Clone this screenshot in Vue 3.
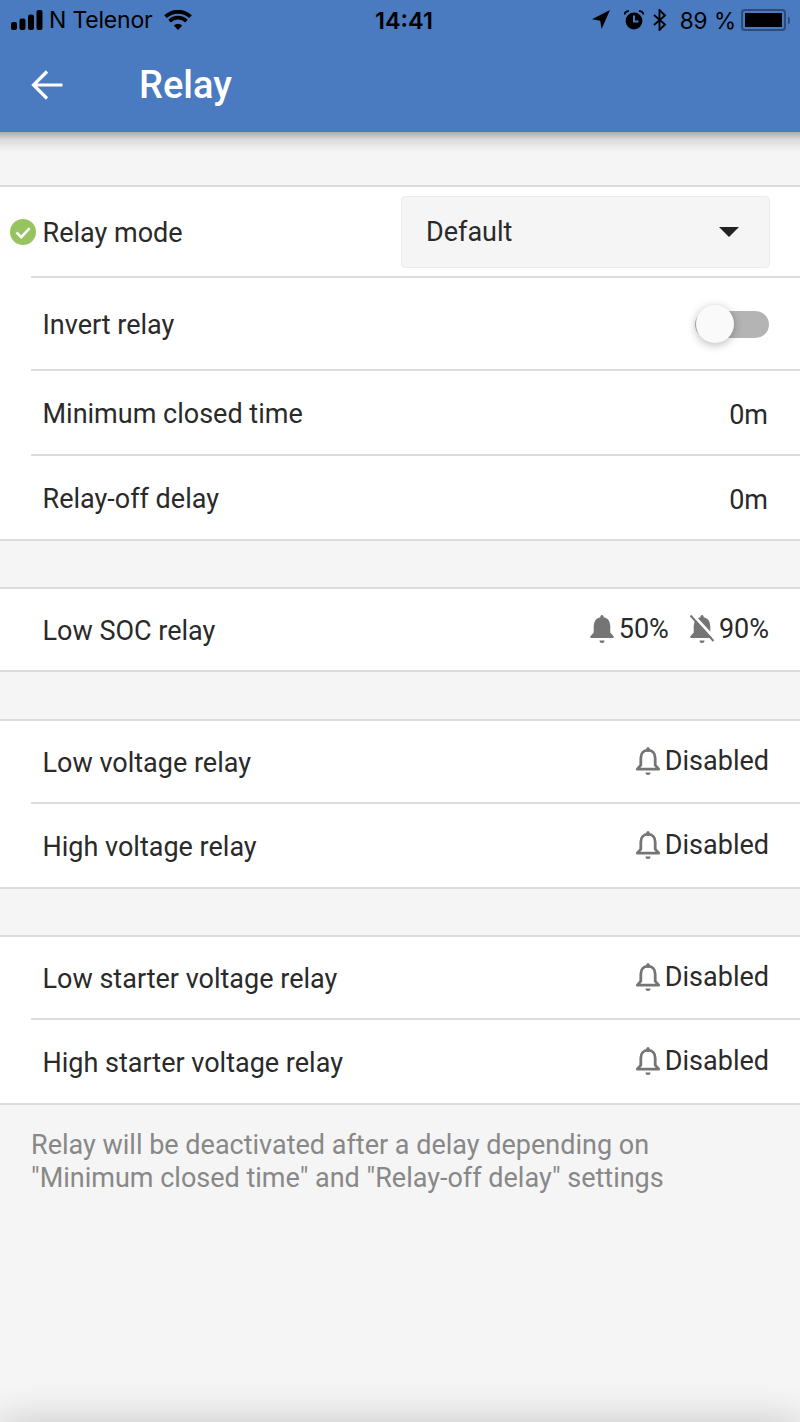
<script setup>
const groups = [
  [
    { label: 'Low voltage relay', value: 'Disabled' },
    { label: 'High voltage relay', value: 'Disabled' },
  ],
  [
    { label: 'Low starter voltage relay', value: 'Disabled' },
    { label: 'High starter voltage relay', value: 'Disabled' },
  ],
]
</script>

<template>
  <div class="page">
    <header class="appbar">
      <div class="status">
        <div class="status-left">
          <svg class="signal" width="32" height="20" viewBox="0 0 32 20">
            <rect x="0" y="12" width="6" height="8" rx="2" />
            <rect x="8.5" y="8.5" width="6" height="11.5" rx="2" />
            <rect x="17" y="4.5" width="6" height="15.5" rx="2" />
            <rect x="25.5" y="0" width="6" height="20" rx="2" />
          </svg>
          <span class="carrier">N Telenor</span>
          <svg class="wifi" width="28" height="20" viewBox="0 0 28 20">
            <path d="M14 20l-4.2-4.6a6 6 0 0 1 8.4 0z" />
            <path d="M6.8 12.4l-2.5-2.7a14 14 0 0 1 19.4 0l-2.5 2.7a10.4 10.4 0 0 0-14.4 0z" />
            <path d="M2.8 8.1L.2 5.3a20 20 0 0 1 27.6 0l-2.6 2.8a16.3 16.3 0 0 0-22.4 0z" />
          </svg>
        </div>
        <span class="time">14:41</span>
        <div class="status-right">
          <svg width="18" height="20" viewBox="0 0 18 20" class="loc">
            <path d="M18 0L0 9.2l8.2 1.6L9.6 19z" />
          </svg>
          <svg width="20" height="20" viewBox="0 0 20 20" class="alarm">
            <circle cx="10" cy="11" r="8.4" />
            <path d="M10 5.5v6h4.5" fill="none" stroke="#4a7abf" stroke-width="2" />
            <path d="M.4 4.6A4 4 0 0 1 5 1.2M19.6 4.6A4 4 0 0 0 15 1.2" fill="none" stroke="#000" stroke-width="1.8" />
          </svg>
          <svg width="14" height="22" viewBox="0 0 14 22" class="bt">
            <path d="M1 6l11 9.5L6.5 21V1L12 6.5 1 16" fill="none" stroke="#000" stroke-width="1.9" />
          </svg>
          <span class="batt-text">89 %</span>
          <div class="battery">
            <div class="battery-body"><div class="battery-fill"></div></div>
            <div class="battery-cap"></div>
          </div>
        </div>
      </div>
      <div class="toolbar">
        <svg class="back" width="32" height="30" viewBox="0 0 32 30">
          <path d="M31.5 15H3M16 1.5L2.5 15 16 28.500" fill="none" stroke="#fff" stroke-width="3.200" />
        </svg>
        <h1 class="title">Relay</h1>
      </div>
    </header>

    <main class="content">
      <section class="group first">
        <div class="row row-mode">
          <svg class="check" width="26" height="26" viewBox="0 0 26 26">
            <circle cx="13" cy="13" r="13" fill="#97c45f" />
            <path d="M6.500 13.500l4.700 4.700 8.500-9" fill="none" stroke="#fff" stroke-width="2.600" />
          </svg>
          <span class="label">Relay mode</span>
          <div class="select">
            <span>Default</span>
            <span class="caret"></span>
          </div>
        </div>
        <div class="row row-invert">
          <span class="label">Invert relay</span>
          <div class="switch"><div class="knob"></div></div>
        </div>
        <div class="row row-time">
          <span class="label">Minimum closed time</span>
          <span class="value plain">0m</span>
        </div>
        <div class="row row-time">
          <span class="label">Relay-off delay</span>
          <span class="value plain">0m</span>
        </div>
      </section>

      <section class="group">
        <div class="row row-alarm">
          <span class="label">Low SOC relay</span>
          <div class="alarms">
            <svg class="bell" width="26" height="30" viewBox="0 0 26 30">
              <rect x="11.400" y="1" width="3.200" height="5" rx="1.600" fill="#757575" />
              <path d="M13 4c-4.500 0-7.200 3.500-7.200 8v7l-3.500 4h21.400l-3.500-4v-7c0-4.500-2.700-8-7.200-8z" fill="#757575" stroke="#757575" stroke-width="2.200" stroke-linejoin="round" />
              <path d="M10.500 26.500h5a2.500 2.500 0 0 1-5 0z" fill="#757575" />
            </svg>
            <span class="value">50%</span>
            <svg class="bell off" width="26" height="30" viewBox="0 0 26 30">
              <rect x="11.400" y="1" width="3.200" height="5" rx="1.600" fill="#757575" />
              <path d="M13 4c-4.500 0-7.200 3.500-7.200 8v7l-3.500 4h21.400l-3.500-4v-7c0-4.500-2.700-8-7.200-8z" fill="#757575" stroke="#757575" stroke-width="2.200" stroke-linejoin="round" />
              <path d="M10.500 26.500h5a2.500 2.500 0 0 1-5 0z" fill="#757575" />
              <path d="M3.500 0.500l23 25" stroke="#fff" stroke-width="3" />
              <path d="M1.500 1.500l23 25.500" stroke="#757575" stroke-width="2" />
            </svg>
            <span class="value">90%</span>
          </div>
        </div>
      </section>

      <section v-for="(group, g) in groups" :key="g" class="group">
        <div v-for="item in group" :key="item.label" class="row row-alarm">
          <span class="label">{{ item.label }}</span>
          <div class="alarms">
            <svg class="bell" width="26" height="30" viewBox="0 0 26 30">
              <rect x="11.400" y="1" width="3.200" height="5" rx="1.600" fill="#757575" />
              <path d="M13 4.200c-4.500 0-7.200 3.500-7.200 8v7l-3.500 4h21.400l-3.500-4v-7c0-4.500-2.700-8-7.200-8z" fill="none" stroke="#757575" stroke-width="2.800" stroke-linejoin="round" />
              <path d="M10.500 26.500h5a2.500 2.500 0 0 1-5 0z" fill="#757575" />
            </svg>
            <span class="value">{{ item.value }}</span>
          </div>
        </div>
      </section>

      <p class="note">Relay will be deactivated after a delay depending on<br />"Minimum closed time" and "Relay-off delay" settings</p>
    </main>
  </div>
</template>

<style>
html, body { margin: 0; background: #f5f5f5; }
</style>

<style scoped>
.page {
  position: relative;
  width: 800px;
  height: 1422px;
  overflow: hidden;
  background: #f5f5f5;
  font-family: Roboto, sans-serif;
  color: #2a2a2a;
}
.page::after {
  content: "";
  position: absolute;
  left: 0;
  right: 0;
  bottom: -40px;
  height: 40px;
  box-shadow: 0 0 40px rgba(0, 0, 0, 0.2);
}
.appbar {
  position: relative;
  height: 132px;
  background: #4a7abf;
}
.appbar::after {
  content: "";
  position: absolute;
  left: 0;
  right: 0;
  top: 100%;
  height: 20px;
  background: linear-gradient(rgba(0, 0, 0, 0.3), rgba(0, 0, 0, 0.1) 40%, rgba(0, 0, 0, 0));
}
.status {
  height: 40px;
  display: flex;
  align-items: center;
  justify-content: space-between;
  padding: 0 10px 0 11px;
  color: #000;
  font-family: Inter, sans-serif;
}
.status-left { display: flex; align-items: center; width: 267px; }
.status-right { display: flex; align-items: center; justify-content: flex-end; width: 260px; }
.signal, .wifi, .loc, .alarm { fill: #000; }
.carrier { font-size: 23px; margin-left: 6px; letter-spacing: -0.2px; }
.wifi { margin-left: 12px; }
.time { font-size: 23.5px; font-weight: 600; }
.alarm { margin-left: 14px; }
.bt { margin-left: 9px; }
.batt-text { font-size: 22.5px; margin-left: 13px; }
.battery { display: flex; align-items: center; margin-left: 5px; }
.battery-body {
  width: 45px;
  height: 22px;
  box-sizing: border-box;
  border: 2px solid #2c4c7c;
  border-radius: 4px;
  padding: 2px;
}
.battery-fill { width: 100%; height: 100%; background: #000; }
.battery-cap { width: 2px; height: 7px; margin-left: 2px; background: #2c4c7c; border-radius: 0 2px 2px 0; }
.toolbar {
  height: 92px;
  display: flex;
  align-items: center;
  padding-left: 31px;
}
.back { margin-top: -2px; }
.title {
  margin: -2px 0 0 76px;
  font-size: 38px;
  font-weight: 500;
  color: #fff;
}
.content { padding-top: 53px; }
.group {
  margin-bottom: 46.4px;
  background: #fff;
  border-top: 2px solid #dcdcdc;
  border-bottom: 2px solid #dcdcdc;
}
.group:nth-last-of-type(1) { margin-bottom: 24px; }
.row {
  position: relative;
  display: flex;
  align-items: center;
  justify-content: space-between;
  padding: 0 31px 0 42.5px;
  box-sizing: border-box;
}
.row + .row::before {
  content: "";
  position: absolute;
  top: -2px;
  left: 31px;
  right: 0;
  height: 2px;
  background: #dcdcdc;
}
.row + .row { margin-top: 2px; }
.label { font-size: 27px; margin-top: 3px; }
.value { font-size: 27px; }
.plain { margin-right: 1px; margin-top: 4px; }
.row-mode { height: 89px; }
.row-mode .label { margin-top: 2px; }
.row-invert { height: 91px; }
.row-time { height: 83px; }
.row-alarm { height: 81px; }
.row-alarm + .row-alarm { height: 83px; }
.check { position: absolute; left: 10px; top: 32px; }
.select {
  width: 369px;
  height: 72px;
  box-sizing: border-box;
  margin-right: -1px;
  display: flex;
  align-items: center;
  justify-content: space-between;
  padding: 0 30px 0 24px;
  background: #f5f5f5;
  border: 1px solid #ececec;
  border-radius: 4px;
  font-size: 27px;
}
.caret {
  width: 0;
  height: 0;
  border-left: 10px solid transparent;
  border-right: 10px solid transparent;
  border-top: 10px solid #222;
}
.switch {
  position: relative;
  width: 74px;
  height: 27px;
  margin-top: 2px;
  background: #b4b4b4;
  border-radius: 14px;
}
.knob {
  position: absolute;
  left: 1px;
  top: -6px;
  width: 38px;
  height: 38px;
  background: #fafafa;
  border-radius: 50%;
  box-shadow: 0 2px 10px rgba(0, 0, 0, 0.28);
}
.alarms { display: flex; align-items: center; margin-top: -1px; }
.bell { margin-right: 4px; }
.off { margin-left: 20px; }
.note {
  margin: 0 0 0 31px;
  font-size: 27px;
  line-height: 33px;
  color: #888;
}
</style>
